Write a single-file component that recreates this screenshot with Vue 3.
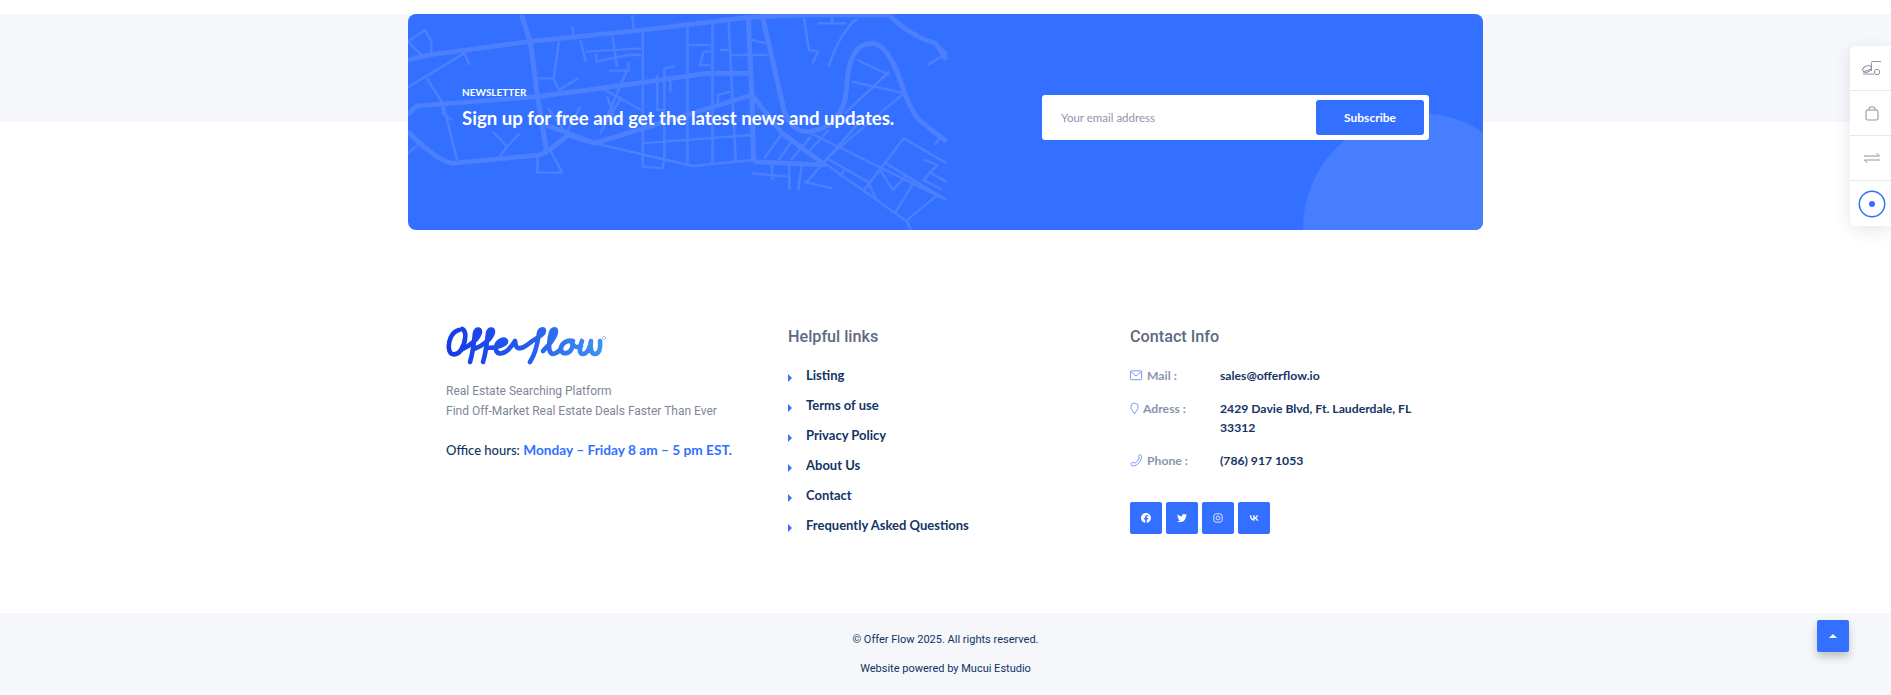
<script setup>
const links = ['Listing', 'Terms of use', 'Privacy Policy', 'About Us', 'Contact', 'Frequently Asked Questions']
</script>

<template>
  <div class="page">
    <section class="newsletter">
      <div class="news-card">
        <svg class="map" viewBox="0 0 1568 720" preserveAspectRatio="none" fill="none" stroke="#4d80ff" stroke-linejoin="round">
          <g stroke-width="14">
            <path d="M22 180L80 165 360 125 680 90 975 52 1130 45 1370 45" />
            <path d="M340 45L365 125 385 290 410 450" />
            <path d="M975 52L985 280 990 485" />
            <path d="M1015 50L1075 330Q1095 395 1140 395Q1240 385 1250 270Q1255 130 1320 130Q1365 130 1400 240Q1430 340 1460 365L1530 425" />
            <path d="M1370 45Q1430 110 1500 130L1530 180" />
            <path d="M22 395Q100 480 145 490L390 465Q410 460 470 405L545 430 985 285 1070 400 1190 495 990 485" />
            <path d="M22 345L45 318 385 290 560 265 860 220 975 220" />
            <path d="M410 375L545 430" />
          </g>
          <g stroke-width="7">
            <path d="M22 125L70 90 88 125V165M22 125L60 165M22 262L180 160 195 195M75 235L120 310 160 480M120 310V340L145 360" />
            <path d="M445 125L430 235 445 270 500 235M385 235H430M483 80L485 110M505 120L520 185M520 155L675 145M550 160V185L640 165 675 165M595 110L608 200M585 212H640V185M635 212L580 350" />
            <path d="M650 45L655 85M680 90V500L735 505 740 480M565 265L675 330M545 430L820 498 985 480M675 430L985 405M740 205V480M720 225V330H740M740 205L770 198M757 240V278M805 80V490M805 135H870M875 70V490M920 65L940 485M850 155L840 195H870M850 155H870M895 150H920M925 165H975" />
            <path d="M890 310V285L925 275M985 120L1025 130M985 165H1030M985 520L1085 530M1042 490V540M1090 490V570M1125 495L1115 570" />
            <path d="M1130 45L1145 150 1170 155 1155 190M1170 70H1250M1210 50V70M1280 55Q1230 100 1200 200M1280 180L1370 225M1265 245L1405 278M1370 215L1245 340M1405 285L1200 470M1130 545L1210 565M1135 550L1300 350M1070 400L1020 475M1100 420L1060 480M1150 410L1095 480M1200 390L1145 455" />
            <path d="M1150 400L1530 600M1190 490L1420 665 1430 690M1420 660L1505 585M1310 545L1335 600M1300 570L1410 415 1530 490M1345 510L1380 570 1420 525M1360 490L1530 600M1440 545L1385 640M1465 478L1505 495 1465 540 1520 570M1480 515L1530 545M1500 130L1530 160 1478 195M1510 415L1498 435M1195 475L1310 545M1245 510L1230 530" />
            <path d="M260 395L300 440 335 400M300 440L280 470M385 470V518H455L420 450M415 325L465 400 505 320M460 375L445 330M560 400L620 290M600 350L580 290M22 460L50 435" />
          </g>
        </svg>
        <div class="news-text">
          <p class="news-label">Newsletter</p>
          <h2 class="news-title">Sign up for free and get the latest news and updates.</h2>
        </div>
        <form class="news-form" @submit.prevent>
          <input class="news-input" type="text" placeholder="Your email address" />
          <button class="news-btn">Subscribe</button>
        </form>
      </div>
    </section>

    <footer class="footer">
      <div class="footer-cols">
        <div class="col">
          <svg class="logo" viewBox="0 0 170 40" fill="none" stroke-linecap="round" stroke-linejoin="round" role="img" aria-label="Offerflow">
            <defs>
              <linearGradient id="logoGrad" gradientUnits="userSpaceOnUse" x1="0" y1="0" x2="160" y2="0">
                <stop offset="0" stop-color="#1638e8" />
                <stop offset="0.55" stop-color="#2560ee" />
                <stop offset="1" stop-color="#3f97f2" />
              </linearGradient>
            </defs>
            <g stroke="url(#logoGrad)" stroke-width="4.6">
              <path d="M13 4C5 6 2 16 3 23C4 30 11 30 15 24C20 16 21 5 16 3" />
              <path d="M15 24C24 20 33 12 34 6C34 2 30 3 29 7C28 15 27 27 24 36" />
              <path d="M28 23C37 20 46 12 47 6C47 2 43 3 42 7C41 15 40 27 37 36" />
              <path d="M41 22C49 22 61 19 60 15C58 12 51 15 50 21C49 29 56 29 62 24C65 21 67 18 69 15C70 19 69 21 72 22C76 23 80 20 85 16C90 12 98 9 98 5C98 2 94 3 93 7C92 15 90 27 84 36" />
              <path d="M97 25C104 18 110 10 110 5C110 2 106 3 105 7C103 14 102 24 105 27C107 29 111 27 114 24" />
              <path d="M127 15C120 13 114 19 115 24C116 29 124 28 126 22C127 19 127 16 125 15C127 21 131 22 135 20" />
              <path d="M136 15C133 22 133 28 137 28C141 28 144 22 145 15C144 22 145 28 149 28C153 28 155 22 154 15" />
            </g>
            <circle cx="158" cy="12" r="1.6" stroke="#8fb6f5" stroke-width="0.8" />
          </svg>
          <p class="about">Real Estate Searching Platform<br />Find Off-Market Real Estate Deals Faster Than Ever</p>
          <p class="hours">Office hours: <strong>Monday – Friday 8 am – 5 pm EST.</strong></p>
        </div>

        <div class="col">
          <h4 class="col-title">Helpful links</h4>
          <ul class="link-list">
            <li v-for="link in links" :key="link"><i class="arrow"></i>{{ link }}</li>
          </ul>
        </div>

        <div class="col">
          <h4 class="col-title">Contact Info</h4>
          <div class="contact-row">
            <span class="contact-label">
              <svg class="contact-icon" viewBox="0 0 14 12" fill="none" stroke="#6f8ff5" stroke-width="1"><rect x="0.5" y="1" width="12" height="9.5" rx="1" /><path d="M1 2L6.5 6.5 12 2" /></svg>
              Mail :
            </span>
            <span class="contact-value">sales@offerflow.io</span>
          </div>
          <div class="contact-row">
            <span class="contact-label">
              <svg class="contact-icon pin" viewBox="0 0 10 14" fill="none" stroke="#6f8ff5" stroke-width="1"><path d="M5 13C3 10 1 7.5 1 5A4 4 0 0 1 9 5C9 7.5 7 10 5 13Z" /></svg>
              Adress :
            </span>
            <span class="contact-value">2429 Davie Blvd, Ft. Lauderdale, FL 33312</span>
          </div>
          <div class="contact-row">
            <span class="contact-label">
              <svg class="contact-icon" viewBox="0 0 14 14" fill="none" stroke="#6f8ff5" stroke-width="1"><path d="M9.5 1.5C10.5 0.5 12.5 1 12.5 2.5C12.5 6 10 11 5.5 12.5C3 13.5 0.5 12 1 10.5C1.5 9 3.5 8.5 4.5 9.5L5.5 10C7.5 8.5 9 6.5 10 4L9.5 3.5Z" /></svg>
              Phone :
            </span>
            <span class="contact-value">(786) 917 1053</span>
          </div>
          <div class="socials">
            <a class="social">
              <svg viewBox="0 0 24 24" fill="#fff"><path d="M24 12.073c0-6.627-5.373-12-12-12s-12 5.373-12 12c0 5.99 4.388 10.954 10.125 11.854v-8.385H7.078v-3.47h3.047V9.43c0-3.007 1.792-4.669 4.533-4.669 1.312 0 2.686.235 2.686.235v2.953H15.83c-1.491 0-1.956.925-1.956 1.874v2.25h3.328l-.532 3.47h-2.796v8.385C19.612 23.027 24 18.062 24 12.073z" /></svg>
            </a>
            <a class="social">
              <svg viewBox="0 0 24 24" fill="#fff"><path d="M23.953 4.57a10 10 0 01-2.825.775 4.958 4.958 0 002.163-2.723c-.951.555-2.005.959-3.127 1.184a4.92 4.92 0 00-8.384 4.482C7.69 8.095 4.067 6.13 1.64 3.162a4.822 4.822 0 00-.666 2.475c0 1.71.87 3.213 2.188 4.096a4.904 4.904 0 01-2.228-.616v.06a4.923 4.923 0 003.946 4.827 4.996 4.996 0 01-2.212.085 4.936 4.936 0 004.604 3.417 9.867 9.867 0 01-6.102 2.105c-.39 0-.779-.023-1.17-.067a13.995 13.995 0 007.557 2.209c9.053 0 13.998-7.496 13.998-13.985 0-.21 0-.42-.015-.63A9.935 9.935 0 0024 4.59z" /></svg>
            </a>
            <a class="social">
              <svg viewBox="0 0 24 24" fill="none" stroke="#dbe6ff" stroke-width="2.4"><rect x="2" y="2" width="20" height="20" rx="5.5" /><circle cx="12" cy="12" r="4.6" /></svg>
            </a>
            <a class="social">
              <svg viewBox="0 0 24 24" fill="#fff"><path d="M13 18.5C6 18.5 2 13.7 1.8 5.6h3.5c.1 5.9 2.7 8.4 4.8 8.9V5.6h3.3v5.1c2-.2 4.2-2.5 4.9-5.1h3.3c-.6 3.2-2.9 5.5-4.6 6.5 1.7.8 4.4 2.9 5.5 6.4h-3.6c-.8-2.5-2.8-4.4-5.5-4.6v4.6z" /></svg>
            </a>
          </div>
        </div>
      </div>

      <div class="copyright">
        <p>© Offer Flow 2025. All rights reserved.</p>
        <p>Website powered by Mucui Estudio</p>
      </div>
    </footer>

    <aside class="side-panel">
      <div class="side-item">
        <svg viewBox="0 0 20 16" width="20" height="16" fill="none" stroke="#8e94a6" stroke-width="1">
          <ellipse cx="5" cy="9" rx="4.4" ry="3" transform="rotate(-22 5 9)" />
          <path d="M1 12L9 9M1 14H12M9.5 2.5V11M9.5 1.5H19" />
          <circle cx="15" cy="12" r="2.7" />
        </svg>
      </div>
      <div class="side-item">
        <svg viewBox="0 0 14 15" width="14" height="15" fill="none" stroke="#8e94a6" stroke-width="1.1">
          <rect x="1" y="4" width="12" height="10" rx="1.8" />
          <path d="M4 4V3A2 2 0 0 1 6 1H8A2 2 0 0 1 10 3V4" />
        </svg>
      </div>
      <div class="side-item">
        <svg viewBox="0 0 16 12" width="16" height="12" fill="none" stroke="#8e94a6" stroke-width="1">
          <path d="M0 4H15.5L12.5 1M16 8H0.5L3.5 11" />
        </svg>
      </div>
      <div class="side-item">
        <svg viewBox="0 0 28 28" width="28" height="28" fill="none">
          <circle cx="14" cy="14" r="12.7" stroke="#3370ff" stroke-width="1.5" />
          <circle cx="14" cy="14" r="3" fill="#3370ff" />
        </svg>
      </div>
    </aside>

    <button class="to-top"><i class="to-top-arrow"></i></button>
  </div>
</template>

<style>
html, body {
  margin: 0;
  background: #fff;
}
</style>

<style scoped>
.page {
  position: relative;
  height: 695px;
  padding-top: 14px;
  box-sizing: border-box;
  overflow: hidden;
  font-family: "Lato", "Liberation Sans", sans-serif;
}

p, h2, h4, ul {
  margin: 0;
  padding: 0;
}

.newsletter {
  background: linear-gradient(#f5f7fb 108px, #fff 108px);
}

.news-card {
  position: relative;
  width: 1075px;
  height: 216px;
  margin: 0 auto;
  padding: 0 54px;
  box-sizing: border-box;
  display: flex;
  align-items: center;
  justify-content: space-between;
  background: #3370ff;
  border-radius: 8px;
  overflow: hidden;
}

.news-card::after {
  content: "";
  position: absolute;
  left: 895px;
  top: 99px;
  width: 232px;
  height: 232px;
  border-radius: 50%;
  background: #477eff;
}

.map {
  position: absolute;
  left: -8px;
  top: -14px;
  width: 560px;
  height: 240px;
  clip-path: inset(14px 7px 0 8px);
}

.news-text {
  position: relative;
  z-index: 1;
  margin-top: -29px;
  color: #fff;
}

.news-label {
  font-size: 10px;
  font-weight: 700;
  line-height: 16px;
  text-transform: uppercase;
}

.news-title {
  font-size: 18.6px;
  font-weight: 700;
  line-height: 26px;
  margin-top: 5px;
}

.news-form {
  position: relative;
  z-index: 1;
  display: flex;
  width: 387px;
  height: 45px;
  padding: 5px;
  margin-top: -9px;
  box-sizing: border-box;
  background: #fff;
  border-radius: 3px;
}

.news-input {
  flex: 1;
  min-width: 0;
  border: 0;
  outline: 0;
  padding: 0 0 0 14px;
  font: 400 11.5px "Lato", sans-serif;
  background: transparent;
}

.news-input::placeholder {
  color: #8f95ab;
}

.news-btn {
  width: 108px;
  border: 0;
  border-radius: 3px;
  background: #3370ff;
  color: #fff;
  font: 700 12px "Lato", sans-serif;
}

.footer-cols {
  display: grid;
  grid-template-columns: repeat(3, 342px);
  width: 1075px;
  height: 383px;
  margin: 0 auto;
  padding: 96px 0 0 38px;
  box-sizing: border-box;
}

.logo {
  display: block;
  width: 170px;
  height: 40px;
}

.about {
  margin-top: 15px;
  font: 400 12px/20px "Roboto", sans-serif;
  color: #80859a;
}

.hours {
  margin-top: 19px;
  font-size: 13px;
  line-height: 20px;
  font-weight: 500;
  color: #133464;
}

.hours strong {
  font-size: 13.7px;
  color: #3370ff;
  font-weight: 700;
}

.col-title {
  padding-top: 1px;
  font: 500 16.2px/20px "Roboto", sans-serif;
  color: #5d6a85;
}

.link-list {
  list-style: none;
  margin-top: 13px;
}

.link-list li {
  display: flex;
  align-items: center;
  height: 30px;
  font-size: 13px;
  font-weight: 700;
  color: #133464;
}

.arrow {
  width: 0;
  height: 0;
  margin: 5px 14px 0 0;
  border-left: 4px solid #3e6ff5;
  border-top: 4px solid transparent;
  border-bottom: 4px solid transparent;
}

.contact-row {
  display: flex;
  margin-top: 14px;
  font-size: 12.2px;
  line-height: 19px;
}

.col-title + .contact-row {
  margin-top: 19px;
}

.contact-label {
  flex: 0 0 90px;
  display: flex;
  align-items: flex-start;
  gap: 4px;
  font-weight: 700;
  color: #8a94ad;
}

.contact-icon {
  width: 13px;
  height: 13px;
  margin-top: 3px;
}

.contact-icon.pin {
  width: 9px;
}

.contact-value {
  width: 210px;
  font-weight: 700;
  color: #133464;
}

.socials {
  display: flex;
  gap: 4px;
  margin-top: 32px;
}

.social {
  display: flex;
  align-items: center;
  justify-content: center;
  width: 32px;
  height: 32px;
  border-radius: 2px;
  background: #3370ff;
}

.social svg {
  width: 10px;
  height: 10px;
}

.copyright {
  height: 82px;
  padding-top: 18px;
  box-sizing: border-box;
  background: #f5f7fb;
  text-align: center;
  font: 400 11px/18px "Roboto", sans-serif;
  color: #0f3263;
}

.copyright p + p {
  margin-top: 11px;
}

.side-panel {
  position: fixed;
  top: 46px;
  right: 0;
  width: 41px;
  background: #fff;
  border-radius: 6px 0 0 6px;
  box-shadow: 0 4px 16px rgba(40, 50, 80, 0.12);
}

.side-item {
  display: flex;
  align-items: center;
  justify-content: center;
  height: 45px;
  padding-left: 3px;
  box-sizing: border-box;
  border-bottom: 1px solid #e6e8ee;
}

.side-item:last-child {
  border-bottom: 0;
}

.to-top {
  position: fixed;
  left: 1817px;
  top: 620px;
  display: flex;
  align-items: center;
  justify-content: center;
  width: 32px;
  height: 32px;
  padding: 0;
  border: 0;
  border-radius: 2px;
  background: #3370ff;
  box-shadow: 0 5px 8px rgba(0, 0, 0, 0.22);
}

.to-top-arrow {
  width: 0;
  height: 0;
  border-left: 4px solid transparent;
  border-right: 4px solid transparent;
  border-bottom: 4px solid #fff;
}
</style>
